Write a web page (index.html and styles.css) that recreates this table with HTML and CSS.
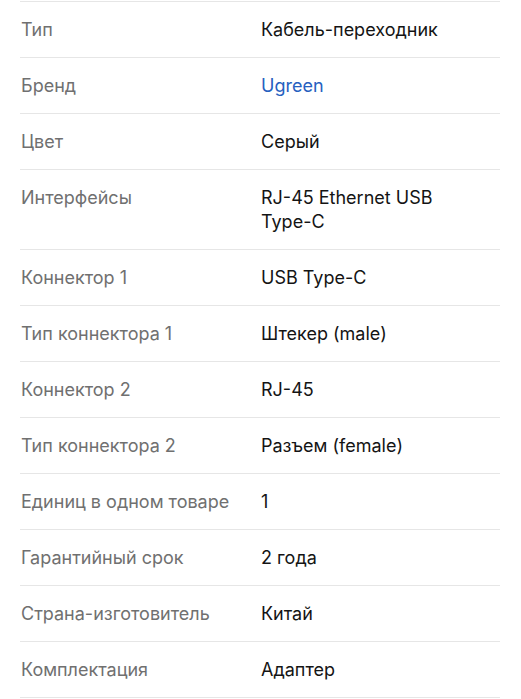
FILE: index.html
```html
<!DOCTYPE html>
<html lang="ru">
<head>
<meta charset="utf-8">
<link rel="stylesheet" href="styles.css">
</head>
<body>
<div class="specs">
  <div class="row"><div class="label">Тип</div><div class="value">Кабель-переходник</div></div>
  <div class="row"><div class="label">Бренд</div><div class="value link">Ugreen</div></div>
  <div class="row"><div class="label">Цвет</div><div class="value">Серый</div></div>
  <div class="row"><div class="label">Интерфейсы</div><div class="value">RJ-45 Ethernet USB <span class="nowrap">Type-C</span></div></div>
  <div class="row"><div class="label">Коннектор 1</div><div class="value">USB Type-C</div></div>
  <div class="row"><div class="label">Тип коннектора 1</div><div class="value">Штекер (male)</div></div>
  <div class="row"><div class="label">Коннектор 2</div><div class="value">RJ-45</div></div>
  <div class="row"><div class="label">Тип коннектора 2</div><div class="value">Разъем (female)</div></div>
  <div class="row"><div class="label">Единиц в одном товаре</div><div class="value">1</div></div>
  <div class="row"><div class="label">Гарантийный срок</div><div class="value">2 года</div></div>
  <div class="row"><div class="label">Страна-изготовитель</div><div class="value">Китай</div></div>
  <div class="row"><div class="label">Комплектация</div><div class="value">Адаптер</div></div>
</div>
</body>
</html>
```
FILE: styles.css
```css
html, body {
  margin: 0;
  padding: 0;
  background: #ffffff;
}
body {
  font-family: Inter, "Noto Sans", sans-serif;
  font-size: 18px;
  line-height: 24px;
}
.specs {
  padding: 1px 21px 0 20px;
}
.row {
  display: grid;
  grid-template-columns: 240px 1fr;
  padding: 16px 0 15px 1px;
  border-top: 1px solid #e6e6e6;
}
.row:last-child {
  border-bottom: 1px solid #e6e6e6;
}
.label {
  color: #707070;
}
.value {
  color: #141414;
}
.nowrap {
  white-space: nowrap;
}
.link {
  color: #2660bf;
}
```
